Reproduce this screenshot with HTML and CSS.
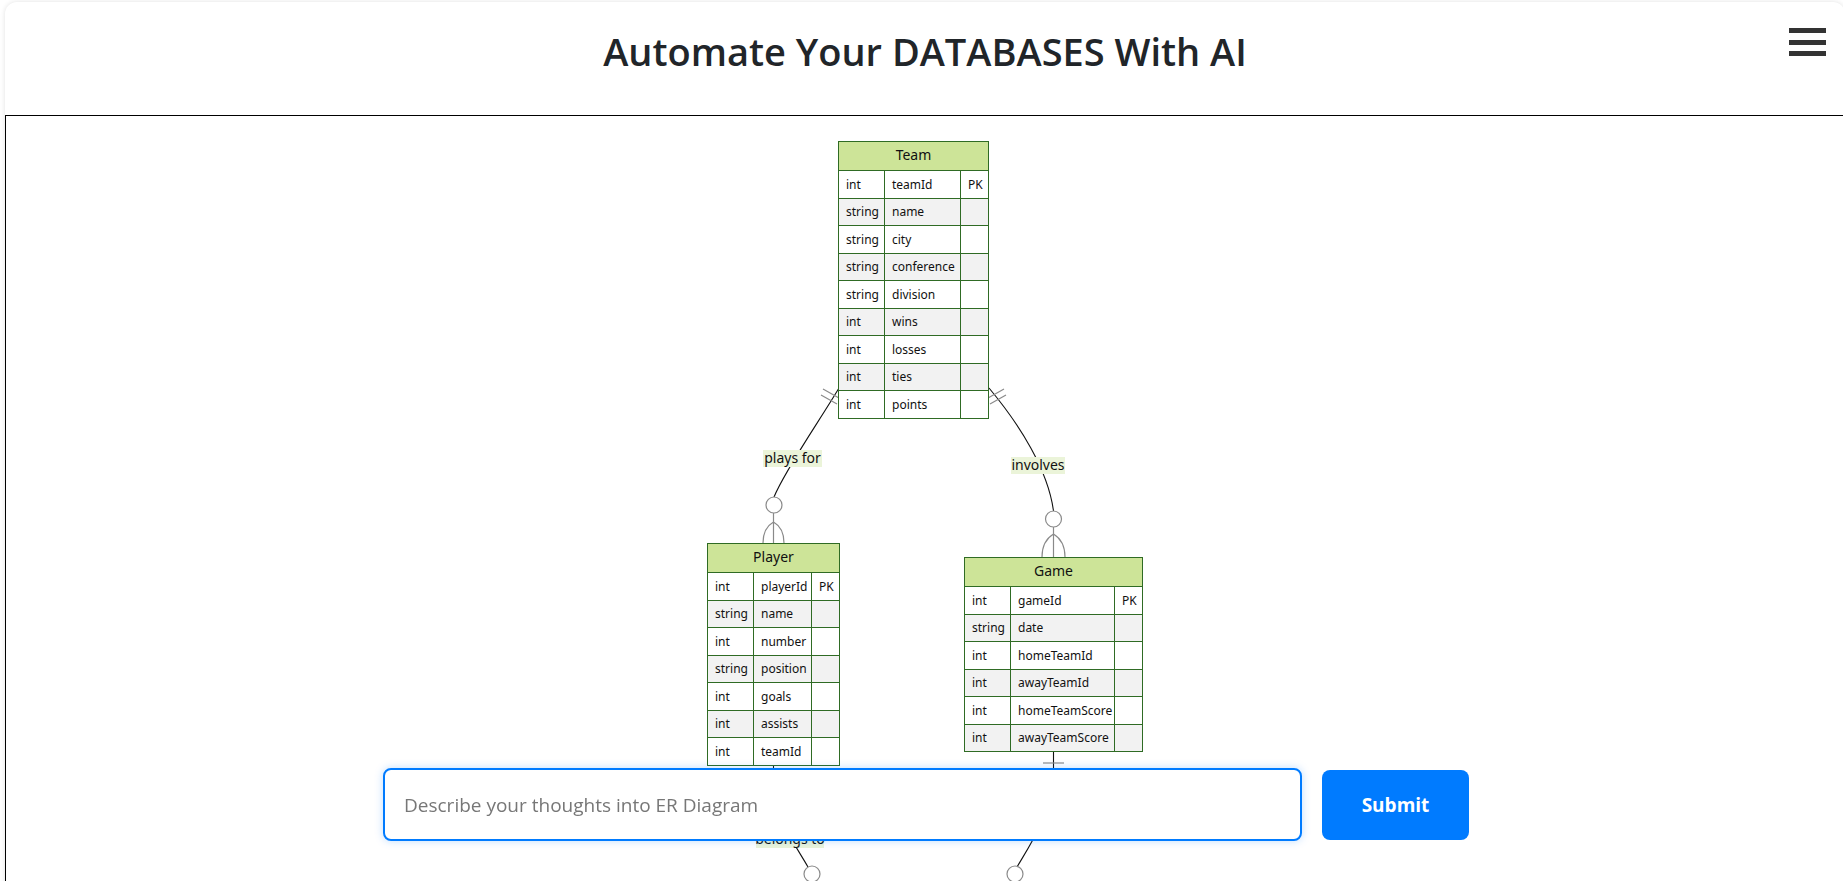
FILE: index.html
```html
<!DOCTYPE html>
<html lang="en">
<head>
    <meta charset="UTF-8">
    <meta name="viewport" content="width=device-width, initial-scale=1.0">
    <title>Automate Your DATABASES With AI</title>
    <link rel="stylesheet" href="styles.css">
</head>
<body>
    <div class="app">
        <header class="topbar">
            <h1>Automate Your DATABASES With AI</h1>
            <div class="menu-btn">
                <span></span>
                <span></span>
                <span></span>
            </div>
        </header>

        <!-- ER diagram canvas -->
        <div class="canvas">
            <svg class="edges" width="1838" height="778" viewBox="6 116 1838 778">
                <!-- Team -> Player -->
                <path class="edge" d="M 839 388 C 820 420, 785 470, 774 497"/>
                <path class="mark" d="M 823 389 L 839 398 M 821 395 L 837 404"/>
                <circle class="mark" cx="774" cy="505" r="8"/>
                <path class="mark" d="M 773.5 513 L 773.5 543 M 763 543 Q 763 528 773.5 522 M 784 543 Q 784 528 773.5 522"/>
                <rect class="label-bg" x="763" y="450" width="59" height="17"/>
                <text class="label" x="792.5" y="463">plays for</text>

                <!-- Team -> Game -->
                <path class="edge" d="M 989 388 C 1020 425, 1048 470, 1053.5 511"/>
                <path class="mark" d="M 1004 389 L 988 398 M 1006 395 L 990 404"/>
                <circle class="mark" cx="1053.5" cy="519" r="8"/>
                <path class="mark" d="M 1053.5 527 L 1053.5 557 M 1042 557 Q 1042 541 1053.5 534 M 1065 557 Q 1065 541 1053.5 534"/>
                <rect class="label-bg" x="1011" y="457" width="54" height="17"/>
                <text class="label" x="1038" y="470">involves</text>

                <!-- Player -> below -->
                <path class="edge" d="M 773.5 765 L 773.5 790 C 773.5 815, 796 846, 808 867"/>
                <circle class="mark" cx="812" cy="874" r="8"/>
                <rect class="label-bg" x="756" y="831" width="68" height="17"/>
                <text class="label" x="790" y="844">belongs to</text>

                <!-- Game -> below -->
                <path class="edge" d="M 1053.5 752 L 1053.5 775 C 1053.5 810, 1030 845, 1017 867"/>
                <path class="mark" d="M 1043 763 L 1064 763"/>
                <circle class="mark" cx="1015" cy="874" r="8"/>
            </svg>

            <table class="entity team">
                <colgroup><col class="c-type"><col><col class="c-key"></colgroup>
                <tr><th colspan="3">Team</th></tr>
                <tr><td>int</td><td>teamId</td><td>PK</td></tr>
                <tr><td>string</td><td>name</td><td></td></tr>
                <tr><td>string</td><td>city</td><td></td></tr>
                <tr><td>string</td><td>conference</td><td></td></tr>
                <tr><td>string</td><td>division</td><td></td></tr>
                <tr><td>int</td><td>wins</td><td></td></tr>
                <tr><td>int</td><td>losses</td><td></td></tr>
                <tr><td>int</td><td>ties</td><td></td></tr>
                <tr><td>int</td><td>points</td><td></td></tr>
            </table>

            <table class="entity player">
                <colgroup><col class="c-type"><col><col class="c-key"></colgroup>
                <tr><th colspan="3">Player</th></tr>
                <tr><td>int</td><td>playerId</td><td>PK</td></tr>
                <tr><td>string</td><td>name</td><td></td></tr>
                <tr><td>int</td><td>number</td><td></td></tr>
                <tr><td>string</td><td>position</td><td></td></tr>
                <tr><td>int</td><td>goals</td><td></td></tr>
                <tr><td>int</td><td>assists</td><td></td></tr>
                <tr><td>int</td><td>teamId</td><td></td></tr>
            </table>

            <table class="entity game">
                <colgroup><col class="c-type"><col><col class="c-key"></colgroup>
                <tr><th colspan="3">Game</th></tr>
                <tr><td>int</td><td>gameId</td><td>PK</td></tr>
                <tr><td>string</td><td>date</td><td></td></tr>
                <tr><td>int</td><td>homeTeamId</td><td></td></tr>
                <tr><td>int</td><td>awayTeamId</td><td></td></tr>
                <tr><td>int</td><td>homeTeamScore</td><td></td></tr>
                <tr><td>int</td><td>awayTeamScore</td><td></td></tr>
            </table>
        </div>
    </div>

    <form class="prompt">
        <input type="text" placeholder="Describe your thoughts into ER Diagram">
        <button type="button">Submit</button>
    </form>
</body>
</html>
```

FILE: styles.css
```css
* {
    margin: 0;
    padding: 0;
    box-sizing: border-box;
}

html, body {
    height: 100%;
    overflow: hidden;
}

body {
    background: #fff;
    font-family: 'Open Sans', 'Noto Sans', sans-serif;
    color: #212529;
}

.app {
    margin: 2px 0 0 5px;
    width: 1840px;
    background: #fff;
    border-radius: 12px 12px 0 0;
    box-shadow: 0 0 5px rgba(0, 0, 0, 0.12);
}

.topbar {
    position: relative;
    height: 113px;
    padding-top: 27px;
    text-align: center;
}

.topbar h1 {
    font-size: 38px;
    font-weight: 600;
    line-height: 1.2;
}

.menu-btn {
    position: absolute;
    top: 26px;
    right: 19px;
    width: 37px;
    display: flex;
    flex-direction: column;
    gap: 6.5px;
}

.menu-btn span {
    display: block;
    height: 5px;
    background: #333;
}

/* diagram */
.canvas {
    position: relative;
    height: 780px;
    border: 1px solid #000;
    overflow: hidden;
}

.edges {
    position: absolute;
    top: 0;
    left: 0;
}

.edge {
    fill: none;
    stroke: #111;
    stroke-width: 1.1;
}

.mark {
    fill: #fff;
    stroke: #8a8a8a;
    stroke-width: 1.2;
}

path.mark {
    fill: none;
}

.label-bg {
    fill: #ebf4d9;
}

.label {
    font-family: 'Noto Sans', sans-serif;
    font-size: 14px;
    fill: #111;
    text-anchor: middle;
}

.entity {
    position: absolute;
    z-index: 1;
    border-collapse: collapse;
    table-layout: fixed;
    background: #fff;
    font-family: 'Noto Sans', sans-serif;
    font-size: 12px;
    color: #111;
}

.entity th,
.entity td {
    border: 1px solid #2f6b24;
    text-align: left;
    white-space: nowrap;
}

.entity th {
    height: 29px;
    padding-bottom: 3px;
    background: #cde498;
    font-size: 14px;
    font-weight: 400;
    text-align: center;
}

.entity td {
    height: 27.5px;
    padding-left: 7px;
}

.entity tr:nth-child(odd) td {
    background: #f2f2f2;
}

.entity .c-type {
    width: 46px;
}

.entity .c-key {
    width: 28px;
}

.team {
    left: 832px;
    top: 25px;
    width: 151px;
}

.player {
    left: 701px;
    top: 427px;
    width: 133px;
}

.game {
    left: 958px;
    top: 441px;
    width: 179px;
}

/* prompt bar */
.prompt {
    position: fixed;
    left: 0;
    right: 0;
    bottom: 40px;
    z-index: 5;
    display: flex;
    justify-content: center;
    align-items: center;
    gap: 20px;
    padding-left: 9px;
}

.prompt input {
    width: 919px;
    height: 73px;
    padding: 0 19px;
    border: 2px solid #007bff;
    border-radius: 8px;
    background: #fff;
    font-family: 'Open Sans', sans-serif;
    font-size: 19px;
    outline: none;
    box-shadow: 0 0 8px rgba(0, 123, 255, 0.25);
}

.prompt input::placeholder {
    color: #777;
}

.prompt button {
    width: 147px;
    height: 70px;
    border: none;
    border-radius: 8px;
    background: #007bff;
    color: #fff;
    font-family: 'Open Sans', sans-serif;
    font-size: 19px;
    font-weight: 700;
    cursor: pointer;
}
```
